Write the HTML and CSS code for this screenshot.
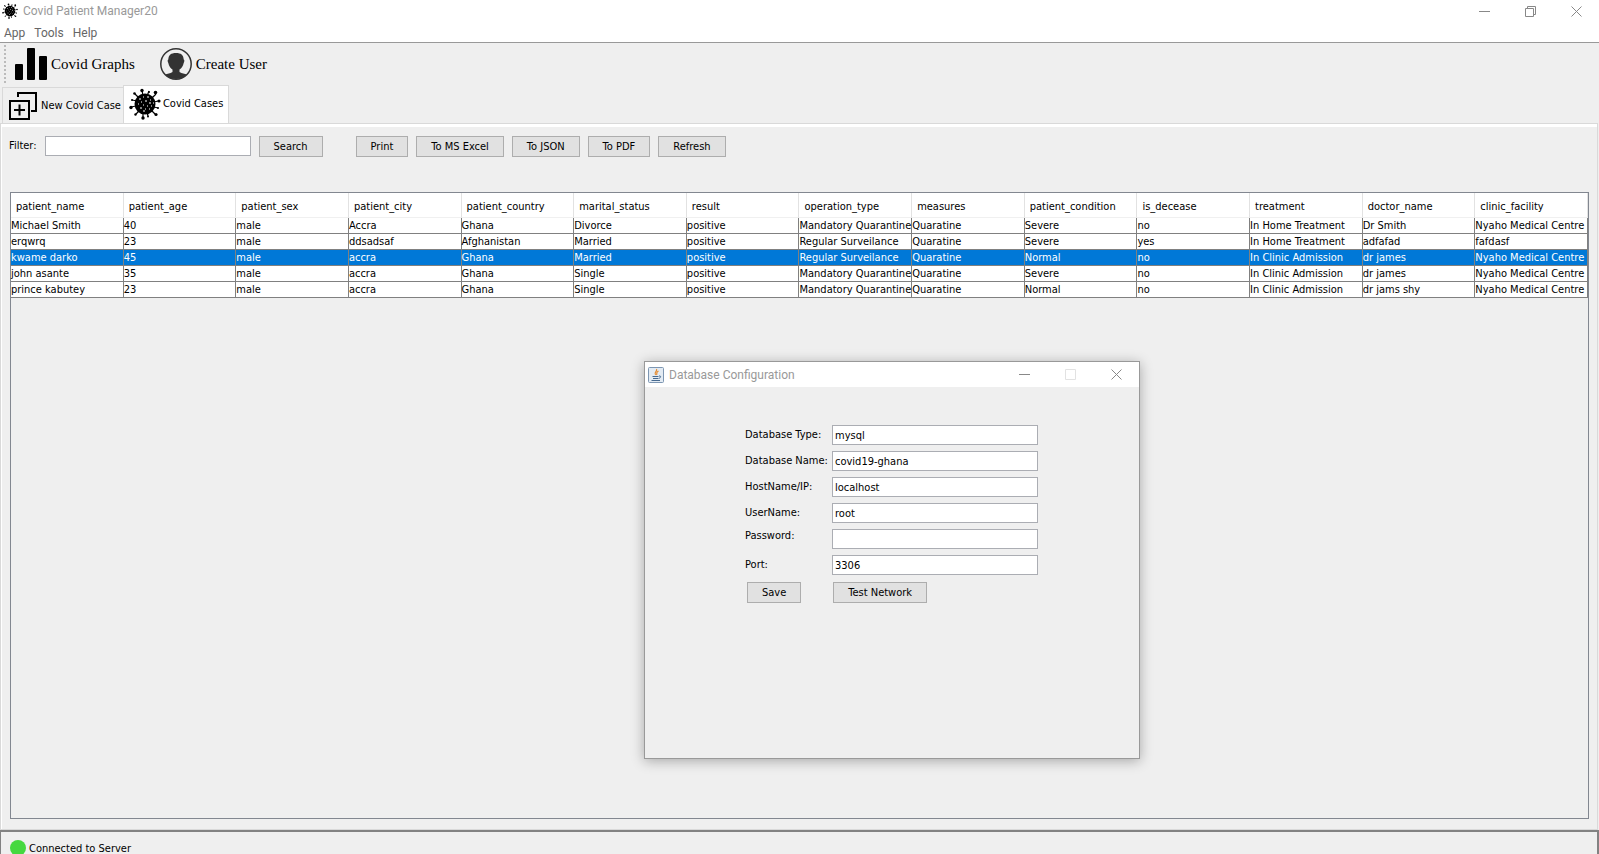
FILE: index.html
```html
<!DOCTYPE html>
<html lang="en">
<head>
    <meta charset="UTF-8">
    <meta name="viewport" content="width=device-width, initial-scale=1.0">
    <title>Covid Patient Manager20</title>
    <link rel="stylesheet" href="styles.css">
</head>
<body>
    <svg class="sprite" aria-hidden="true">
        <symbol id="virus" viewBox="0 0 32 32">
            <g stroke="#000" stroke-width="1.2">
                <path d="M13 2L14 8M20 3L18 8M27 6L22 11M29 13L25 14M29 20L25 19M26 26L22 22M19 28L18 24M14 30L14 24M7 26L11 22M2 19L7 18M3 12L8 13M6 6L10 10"/>
            </g>
            <circle cx="16" cy="16" r="10.5"/>
            <circle cx="13" cy="2.5" r="1.7"/><circle cx="20" cy="4" r="1"/><circle cx="26.5" cy="4.5" r="1.8"/>
            <circle cx="30" cy="13" r="1.6"/><circle cx="29" cy="20" r="1"/><circle cx="27" cy="26.5" r="1.6"/>
            <circle cx="19" cy="28.5" r="1"/><circle cx="14" cy="30" r="1.7"/><circle cx="6.5" cy="26.5" r="1.2"/>
            <circle cx="2" cy="19.5" r="1.7"/><circle cx="3" cy="12" r="1"/><circle cx="5.5" cy="5.5" r="1.3"/>
            <path d="M10 11h2M14 9h1M18 9h2M21 12h1M12 14h1M16 13h2M20 15h2M9 16h1M14 17h1M18 18h1M22 18h1M11 20h2M16 21h1M20 21h1M14 23h2M24 15h1" stroke="#fff" stroke-width="1"/>
        </symbol>
        <symbol id="close" viewBox="0 0 11 11">
            <path d="M.5 .5L10.5 10.5M10.5 .5L.5 10.5" stroke="#888" fill="none"/>
        </symbol>
        <symbol id="minimize" viewBox="0 0 11 11">
            <path d="M0 5.5H11" stroke="#888"/>
        </symbol>
    </svg>

    <header class="titlebar">
        <svg class="app-icon"><use href="#virus"/></svg>
        <h1 class="title">Covid Patient Manager20</h1>
        <div class="window-buttons">
            <button type="button" aria-label="Minimize"><svg><use href="#minimize"/></svg></button>
            <button type="button" aria-label="Restore">
                <svg viewBox="0 0 11 11" fill="none" stroke="#888"><path d="M.5 2.5H8.5V10.5H.5ZM2.5 2.5V.5H10.5V8.5H8.5"/></svg>
            </button>
            <button type="button" aria-label="Close"><svg><use href="#close"/></svg></button>
        </div>
    </header>

    <nav class="menubar">
        <button type="button">App</button>
        <button type="button">Tools</button>
        <button type="button">Help</button>
    </nav>

    <div class="toolbar">
        <span class="grip"></span>
        <button type="button" class="tool">
            <svg viewBox="0 0 32 32"><rect x="0" y="16" width="8" height="16" rx="1"/><rect x="12" y="0" width="8" height="32" rx="1"/><rect x="24" y="8" width="8" height="24" rx="1"/></svg>
            Covid Graphs
        </button>
        <button type="button" class="tool">
            <svg viewBox="0 0 32 32">
                <circle cx="16" cy="16" r="15.2" fill="#efefef" stroke="#333" stroke-width="1.5"/>
                <path d="M16 5C11 5 8.500 7 8.300 11.500Q7 12 8.300 15C9 18 10.500 20.500 12.500 21.500V24C10 25.500 7.500 25.500 5 26.500Q9 31 16 31T27 26.500C24.500 25.500 22 25.500 19.500 24V21.500C21.500 20.500 23 18 23.700 15Q25 12 23.700 11.500C23.500 7 21 5 16 5Z" fill="#333"/>
            </svg>
            Create User
        </button>
    </div>

    <div class="tabs" role="tablist">
        <button type="button" class="tab" role="tab" aria-selected="false">
            <svg viewBox="0 0 28 28" fill="none" stroke="#000" stroke-width="2"><path d="M1 9H20V27H1ZM10.500 12.500V23.500M5 18H16M9 5V1H27V19H22"/></svg>
            New Covid Case
        </button>
        <button type="button" class="tab active" role="tab" aria-selected="true">
            <svg class="virus"><use href="#virus"/></svg>
            Covid Cases
        </button>
    </div>

    <main class="panel">
        <div class="filter-bar">
            <label for="filter">Filter:</label>
            <input type="text" id="filter" class="field">
            <button type="button" class="btn search">Search</button>
            <button type="button" class="btn">Print</button>
            <button type="button" class="btn">To MS Excel</button>
            <button type="button" class="btn">To JSON</button>
            <button type="button" class="btn">To PDF</button>
            <button type="button" class="btn">Refresh</button>
        </div>

        <div class="table-frame">
            <table class="cases">
                <thead>
                    <tr><th>patient_name</th><th>patient_age</th><th>patient_sex</th><th>patient_city</th><th>patient_country</th><th>marital_status</th><th>result</th><th>operation_type</th><th>measures</th><th>patient_condition</th><th>is_decease</th><th>treatment</th><th>doctor_name</th><th>clinic_facility</th></tr>
                </thead>
                <tbody>
                    <tr><td>Michael Smith</td><td>40</td><td>male</td><td>Accra</td><td>Ghana</td><td>Divorce</td><td>positive</td><td>Mandatory Quarantine</td><td>Quaratine</td><td>Severe</td><td>no</td><td>In Home Treatment</td><td>Dr Smith</td><td>Nyaho Medical Centre</td></tr>
                    <tr><td>erqwrq</td><td>23</td><td>male</td><td>ddsadsaf</td><td>Afghanistan</td><td>Married</td><td>positive</td><td>Regular Surveilance</td><td>Quaratine</td><td>Severe</td><td>yes</td><td>In Home Treatment</td><td>adfafad</td><td>fafdasf</td></tr>
                    <tr class="selected"><td>kwame darko</td><td>45</td><td>male</td><td>accra</td><td>Ghana</td><td>Married</td><td>positive</td><td>Regular Surveilance</td><td>Quaratine</td><td>Normal</td><td>no</td><td>In Clinic Admission</td><td>dr james</td><td>Nyaho Medical Centre</td></tr>
                    <tr><td>john asante</td><td>35</td><td>male</td><td>accra</td><td>Ghana</td><td>Single</td><td>positive</td><td>Mandatory Quarantine</td><td>Quaratine</td><td>Severe</td><td>no</td><td>In Clinic Admission</td><td>dr james</td><td>Nyaho Medical Centre</td></tr>
                    <tr><td>prince kabutey</td><td>23</td><td>male</td><td>accra</td><td>Ghana</td><td>Single</td><td>positive</td><td>Mandatory Quarantine</td><td>Quaratine</td><td>Normal</td><td>no</td><td>In Clinic Admission</td><td>dr jams shy</td><td>Nyaho Medical Centre</td></tr>
                </tbody>
            </table>
        </div>
    </main>

    <footer class="statusbar">
        <span class="status-dot"></span>
        <span>Connected to Server</span>
    </footer>

    <section class="dialog" role="dialog" aria-labelledby="dialog-title">
        <header class="dialog-titlebar">
            <svg class="java-icon" viewBox="0 0 16 16" fill="none">
                <rect x=".5" y=".5" width="15" height="15" rx="1" fill="#e3ebf3" stroke="#7d96b2"/>
                <path d="M8.500 2C10 4 5.500 5 7.500 8M10.500 4C7.500 5.500 9.500 6.500 8.500 8" stroke="#e58a2e" stroke-width="1.2"/>
                <path d="M4.500 9.500H10.500M11 9C13.500 8.500 13 11 10.500 11.500M5 11.500H10M3.500 13.500H12" stroke="#46698f"/>
            </svg>
            <h2 class="title" id="dialog-title">Database Configuration</h2>
            <div class="window-buttons">
                <button type="button" aria-label="Minimize"><svg><use href="#minimize"/></svg></button>
                <button type="button" aria-label="Maximize" disabled>
                    <svg viewBox="0 0 11 11" fill="none" stroke="#e2e2e2"><path d="M.5 .5H10.500V10.500H.5Z"/></svg>
                </button>
                <button type="button" aria-label="Close"><svg><use href="#close"/></svg></button>
            </div>
        </header>
        <form class="config-form">
            <label for="db-type">Database Type:</label>
            <input type="text" id="db-type" class="field" value="mysql">
            <label for="db-name">Database Name:</label>
            <input type="text" id="db-name" class="field" value="covid19-ghana">
            <label for="host">HostName/IP:</label>
            <input type="text" id="host" class="field" value="localhost">
            <label for="user">UserName:</label>
            <input type="text" id="user" class="field" value="root">
            <label for="password" class="label-top">Password:</label>
            <input type="password" id="password" class="field">
            <label for="port">Port:</label>
            <input type="text" id="port" class="field" value="3306">
            <div class="form-buttons">
                <button type="button" class="btn">Save</button>
                <button type="button" class="btn">Test Network</button>
            </div>
        </form>
    </section>
</body>
</html>
```
FILE: styles.css
```css
* {
    box-sizing: border-box;
}

body {
    margin: 0;
    height: 100vh;
    display: flex;
    flex-direction: column;
    overflow: hidden;
    background: #efefef;
    color: #000;
    font-family: Tahoma, "DejaVu Sans Condensed", sans-serif;
    font-size: 11px;
    line-height: 14px;
}

button,
input {
    font: inherit;
    color: inherit;
}

button {
    padding: 0;
    border: none;
    background: none;
    white-space: nowrap;
}

.sprite {
    display: none;
}

/* Window frame */
.titlebar {
    flex: none;
    display: flex;
    align-items: center;
    gap: 5px;
    height: 22px;
    padding-left: 2px;
    background: #fff;
}

.app-icon {
    width: 16px;
    height: 16px;
}

.title {
    margin: 0;
    font-family: Roboto, sans-serif;
    font-size: 12px;
    font-weight: normal;
    color: #999;
}

.window-buttons {
    display: flex;
    margin-left: auto;
}

.window-buttons button {
    display: flex;
    justify-content: center;
    width: 46px;
}

.window-buttons svg {
    width: 11px;
    height: 11px;
}

.menubar {
    flex: none;
    display: flex;
    gap: 9px;
    height: 21px;
    padding: 1px 0 0 4px;
    background: #fff;
    border-bottom: 1px solid #999;
    font-family: Roboto, sans-serif;
    font-size: 12px;
    color: #666;
}

/* Toolbar */
.toolbar {
    flex: none;
    display: flex;
    align-items: center;
    height: 42px;
    padding-left: 4px;
    font-family: "Liberation Serif", serif;
    font-size: 15px;
}

.grip {
    width: 2px;
    height: 38px;
    margin-right: 9px;
    background: repeating-linear-gradient(#bbb 0 2px, transparent 2px 4px);
}

.tool {
    display: flex;
    align-items: center;
    gap: 4px;
    margin-right: 25px;
}

.tool svg {
    width: 32px;
    height: 32px;
}

/* Tabs */
.tabs {
    flex: none;
    display: flex;
    align-items: flex-end;
    padding-left: 2px;
}

.tab {
    display: flex;
    align-items: center;
    gap: 4px;
    height: 36px;
    padding: 0 2px 0 6px;
    border: 1px solid #d9d9d9;
    border-width: 1px 0 0 1px;
}

.tab svg {
    width: 28px;
    height: 28px;
}

.tab.active {
    height: 38px;
    padding: 0 5px 2px;
    gap: 2px;
    border-right-width: 1px;
    background: #fff;
}

.tab .virus {
    width: 32px;
    height: 32px;
}

/* Cases panel */
.panel {
    flex: 1;
    min-height: 0;
    display: flex;
    flex-direction: column;
    margin-right: 1px;
    padding: 9px 8px 10px;
    border: 1px solid #d9d9d9;
    box-shadow: inset 1px 3px #fff;
}

.filter-bar {
    display: flex;
    align-items: flex-start;
    gap: 8px;
    padding-top: 3px;
    margin-bottom: 35px;
}

.filter-bar label {
    line-height: 20px;
}

.field {
    width: 206px;
    height: 20px;
    padding: 0 2px;
    border: 1px solid #abadb3;
    border-radius: 0;
    background: #fff;
}

.btn {
    height: 21px;
    padding: 0 14px;
    border: 1px solid #adadad;
    background: #e1e1e1;
}

.search {
    margin-right: 25px;
}

.table-frame {
    flex: 1;
    margin-left: 1px;
    border: 1px solid #828790;
}

.cases {
    width: 100%;
    table-layout: fixed;
    border-collapse: separate;
    border-spacing: 0;
    background: #fff;
    white-space: nowrap;
}

.cases th {
    height: 25px;
    padding: 3px 5px 0;
    border-right: 1px solid #e2e2e2;
    border-bottom: 1px solid #f0f0f0;
    font-weight: normal;
    text-align: left;
}

.cases td {
    height: 16px;
    padding: 0;
    border-right: 1px solid #808080;
    border-bottom: 1px solid #808080;
}

.cases .selected {
    background: #0078d7;
    color: #fff;
}

/* Status bar */
.statusbar {
    flex: none;
    display: flex;
    align-items: flex-start;
    gap: 3px;
    height: 24px;
    padding: 8px 9px 0;
    border: 2px solid #828282;
    border-bottom: none;
    border-left-width: 1px;
    line-height: 17px;
}

.status-dot {
    width: 16px;
    height: 16px;
    border-radius: 50%;
    background: #45d83f;
}

/* Database dialog */
.dialog {
    position: absolute;
    top: 361px;
    left: 644px;
    width: 496px;
    height: 398px;
    border: 1px solid #999;
    background: #efefef;
    box-shadow: 0 2px 12px rgba(0, 0, 0, 0.3);
}

.dialog-titlebar {
    display: flex;
    align-items: center;
    gap: 5px;
    height: 25px;
    padding-left: 3px;
    background: #fff;
}

.java-icon {
    width: 16px;
    height: 16px;
}

.config-form {
    display: grid;
    grid-template-columns: 81px 206px;
    gap: 6px;
    align-items: center;
    padding: 38px 0 0 100px;
    white-space: nowrap;
}

.label-top {
    align-self: start;
}

.form-buttons {
    grid-column: 1 / -1;
    display: flex;
    gap: 32px;
    padding: 1px 0 0 2px;
}
```
